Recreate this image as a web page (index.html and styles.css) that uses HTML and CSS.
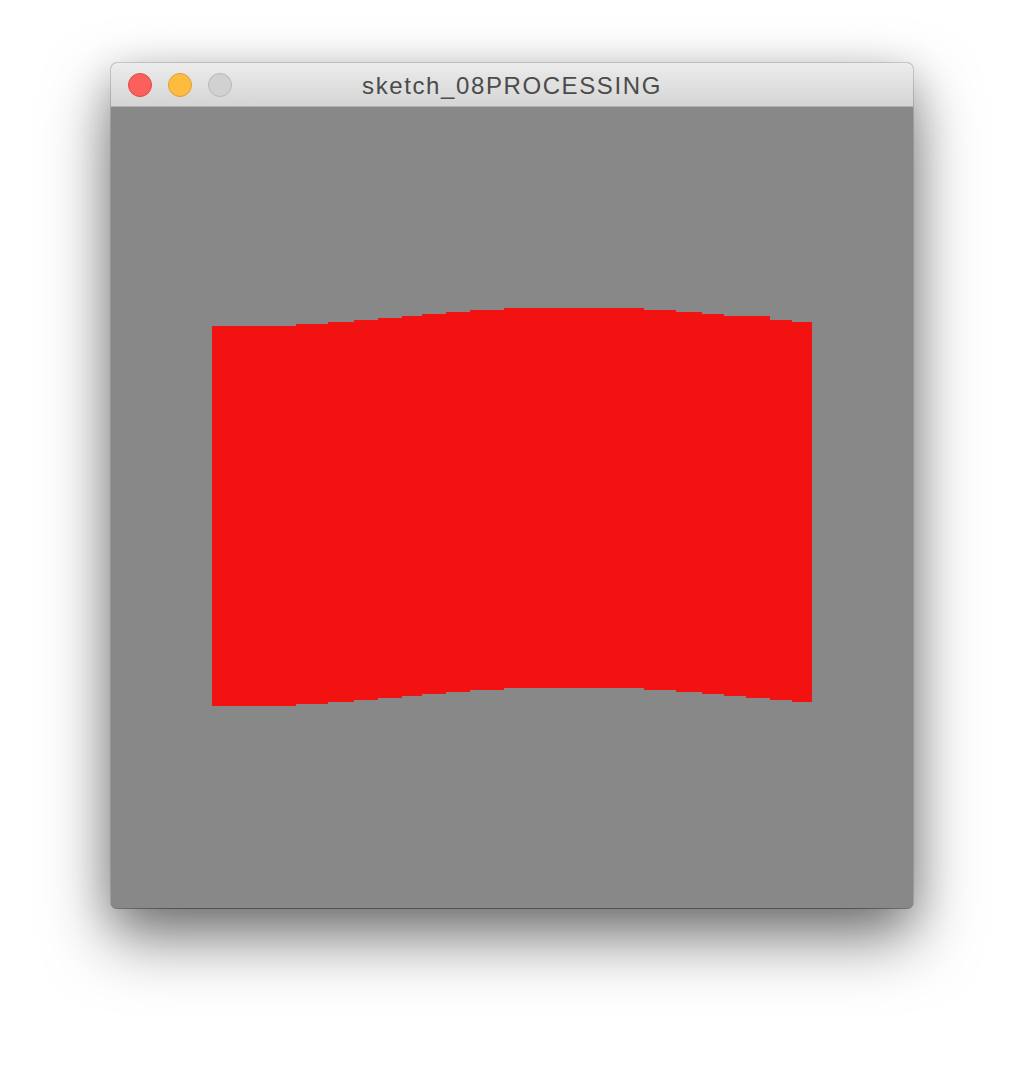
FILE: index.html
```html
<!DOCTYPE html>
<html>
<head>
<meta charset="utf-8">
<title>sketch_08PROCESSING</title>
<link rel="stylesheet" href="styles.css">
</head>
<body>
<div class="window">
  <div class="titlebar">
    <div class="lights">
      <span class="light close"></span>
      <span class="light min"></span>
      <span class="light max"></span>
    </div>
    <div class="title">sketch_08PROCESSING</div>
  </div>
  <div class="canvas">
    <svg class="sketch" width="802" height="801" viewBox="111 107 802 801" shape-rendering="crispEdges">
      <polygon fill="#f21212" points="212,326 296,326 296,324 328,324 328,322 354,322 354,320 378,320 378,318 402,318 402,316 422,316 422,314 446,314 446,312 470,312 470,310 504,310 504,308 644,308 644,310 676,310 676,312 702,312 702,314 724,314 724,316 770,316 770,318 770,320 792,320 792,322 812,322 812,702 792,702 792,700 770,700 770,698 746,698 746,696 724,696 724,694 702,694 702,692 676,692 676,690 644,690 644,688 504,688 504,690 470,690 470,692 446,692 446,694 422,694 422,696 402,696 402,698 378,698 378,700 354,700 354,702 328,702 328,704 296,704 296,706 212,706"/>
    </svg>
  </div>
</div>
</body>
</html>
```
FILE: styles.css
```css
html, body {
  margin: 0;
  padding: 0;
  background: #ffffff;
}
body {
  width: 1024px;
  height: 1068px;
  padding-top: 63px;
  padding-left: 111px;
  box-sizing: border-box;
  overflow: hidden;
}
.window {
  width: 802px;
  height: 845px;
  border-radius: 6px;
  overflow: hidden;
  box-shadow: 0 1px 0 rgba(0, 0, 0, 0.25), 0 0 0 1px rgba(0, 0, 0, 0.14), 0 30px 65px rgba(0, 0, 0, 0.5), 0 10px 40px rgba(0, 0, 0, 0.18);
  display: flex;
  flex-direction: column;
  background: #888888;
}
.titlebar {
  position: relative;
  height: 43px;
  flex: none;
  background: linear-gradient(#ececec, #d5d5d5);
  border-bottom: 1px solid #b1b1b1;
  display: flex;
  align-items: center;
}
.lights {
  display: flex;
  gap: 16px;
  padding-left: 17px;
  padding-top: 1px;
}
.light {
  width: 22px;
  height: 22px;
  border-radius: 50%;
  display: block;
}
.close {
  background: #fc605c;
  border: 1px solid #de4a46;
}
.min {
  background: #fdbc40;
  border: 1px solid #dda032;
}
.max {
  background: #d1d1d1;
  border: 1px solid #b8b8b8;
}
.title {
  position: absolute;
  left: 0;
  right: 0;
  top: 0;
  bottom: 0;
  display: flex;
  align-items: center;
  justify-content: center;
  font-family: "Liberation Sans", Arial, sans-serif;
  font-size: 24px;
  letter-spacing: 1.6px;
  color: #4b4b4b;
  padding-top: 2px;
}
.canvas {
  flex: 1;
  background: #888888;
}
.sketch {
  display: block;
}
```
